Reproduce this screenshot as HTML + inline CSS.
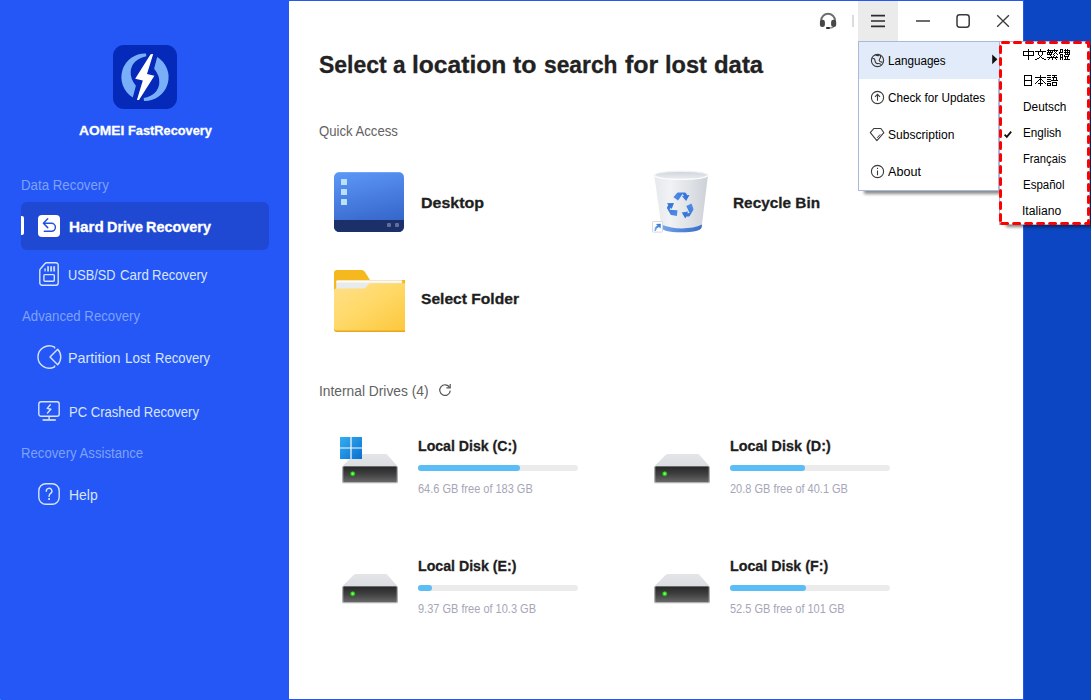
<!DOCTYPE html>
<html><head><meta charset="utf-8"><title>AOMEI FastRecovery</title>
<style>
html,body{margin:0;padding:0}
body{width:1091px;height:700px;position:relative;overflow:hidden;background:#0c46c3;font-family:"Liberation Sans",sans-serif}
.a{position:absolute}
.t{position:absolute;white-space:nowrap;line-height:normal;transform-origin:0 50%;font-family:"Liberation Sans",sans-serif}
svg{position:absolute;overflow:visible}
#side{left:0;top:0;width:289px;height:700px;background:#2457f5}
#main{left:289px;top:1px;width:734px;height:698px;background:#ffffff}
#topb{left:288px;top:0;width:736px;height:1px;background:#2457f5}
#botb{left:288px;top:699px;width:736px;height:1px;background:#2457f5}
#rightb{left:1023px;top:0;width:1px;height:700px;background:#2457f5}
#sideb{left:288px;top:0;width:1px;height:700px;background:#2457f5}
#dot{left:0;top:699px;width:1px;height:1px;background:#0aa0ff}
#sel{left:21px;top:202px;width:248px;height:48px;border-radius:6px;background:#1f49d2}
#selbar{left:21px;top:216px;width:3px;height:19px;border-radius:0 2px 2px 0;background:#fff}
#logo{left:113px;top:45px;width:64px;height:64px;border-radius:11px;background:#0529b8}
#mbtn{left:858px;top:1px;width:40px;height:40px;background:#ebebeb}
#sep{left:852px;top:15px;width:1.6px;height:12px;background:#dcdcdc}
#menu{left:858px;top:41px;width:141px;height:150px;background:#fff;border:1px solid #a9b9d9;box-sizing:border-box;box-shadow:5px 4px 3px -1px rgba(0,0,0,.45)}
#mhl{left:859px;top:42px;width:140px;height:37px;background:#e1ebf9}
#sub{left:999px;top:41px;width:91px;height:184px;box-sizing:border-box;border:1px solid #a9b9d9;background:#fff;box-shadow:6px 3px 3px -1px rgba(0,0,0,.5)}
.bar{height:6px;width:160px;border-radius:3px;background:#ebebeb}
.fill{height:6px;border-radius:3px;background:#5bbdf6;left:0;top:0}

</style></head>
<body>
<div class="a" id="side"></div>
<div class="a" id="main"></div>
<div class="a" id="topb"></div><div class="a" id="botb"></div><div class="a" id="rightb"></div><div class="a" id="sideb"></div><div class="a" id="dot"></div>

<!-- logo -->
<div class="a" id="logo"></div>
<svg style="left:113px;top:45px" width="64" height="64" viewBox="0 0 64 64">
 <g fill="#79aef9">
  <path id="cres" d="M33,8.4 A23.8,23.8 0 0 0 19.8,52.5 L22.9,40.7 Q17.2,34 17.7,26.5 Q18.8,14.6 33.3,11.3 Z"/>
  <use href="#cres" transform="rotate(180 32 32.2)"/>
 </g>
 <path fill="#fff" d="M37.6,9.3 L40.2,9 L34,28.9 L41.4,30.7 L26,55 L23.9,55 L29.8,35.4 L22.2,33.8 Z"/>
</svg>

<!-- selected item -->
<div class="a" id="sel"></div><div class="a" id="selbar"></div>
<svg style="left:38px;top:215px" width="22" height="22" viewBox="0 0 22 22">
 <rect x="0" y="0" width="22" height="22" rx="4" fill="#fff"/>
 <path d="M9.7,3.8 L5.4,8.3 L9.7,12.6 M5.6,8.3 H13.4 A4,4 0 0 1 13.4,16.3 H6.3" fill="none" stroke="#2452e0" stroke-width="1.5" stroke-linecap="round" stroke-linejoin="round"/>
</svg>
<!-- sd card -->
<svg style="left:39px;top:262px" width="20" height="24" viewBox="0 0 20 24">
 <g fill="none" stroke="#d6e4fd" stroke-width="1.4" stroke-linejoin="round">
  <path d="M7.6,0.8 H17 a2.2,2.2 0 0 1 2.2,2.2 V21 a2.2,2.2 0 0 1 -2.2,2.2 H3 a2.2,2.2 0 0 1 -2.2,-2.2 V8.3 Q0.8,7.4 1.5,6.7 L6,1.5 Q6.7,0.8 7.6,0.8 Z"/>
  <rect x="4.9" y="12.6" width="10.4" height="6.6" rx="1"/>
 </g>
 <g fill="#c3d7fc"><rect x="5.3" y="6.4" width="1.5" height="3"/><rect x="8.1" y="4.2" width="1.9" height="5.3"/><rect x="11.2" y="4.2" width="1.9" height="5.3"/><rect x="14.2" y="4.2" width="1.9" height="5.3"/></g>
</svg>
<!-- partition -->
<svg style="left:36px;top:345px" width="24" height="24" viewBox="0 0 24 24">
 <g fill="none" stroke="#d6e4fd" stroke-width="1.4" stroke-linejoin="round" stroke-linecap="butt">
  <path d="M18.6,3.5 V2.2 A11.2,11.2 0 1 0 18.6,21.8 V20.5"/>
  <path d="M14,12 L21.7,4.3 A11.2,11.2 0 0 1 21.7,19.7 Z"/>
 </g>
</svg>
<!-- pc -->
<svg style="left:38px;top:401px" width="22" height="21" viewBox="0 0 22 21">
 <g fill="none" stroke="#d6e4fd" stroke-width="1.4" stroke-linejoin="round" stroke-linecap="round">
  <rect x="0.8" y="0.7" width="20.4" height="14.5" rx="2.2"/>
  <path d="M12.3,3.8 L9.2,7.4 L12.8,8.3 L9.5,12"/>
  <path d="M11.1,15.6 V18.6" stroke-linecap="butt"/>
  <path d="M4.6,19 H17.8" stroke-width="1.7" stroke-linecap="butt"/>
 </g>
</svg>
<!-- help -->
<svg style="left:38px;top:483px" width="22" height="22" viewBox="0 0 22 22">
 <g fill="none" stroke="#d6e4fd" stroke-width="1.4" stroke-linecap="round">
  <rect x="0.8" y="0.8" width="20.4" height="20.4" rx="7"/>
  <path d="M8.3,8.2 A2.8,2.8 0 1 1 12.6,10.4 Q11.1,11.5 11.1,13.4"/>
 </g>
 <rect x="10.2" y="15.1" width="1.8" height="1.8" fill="#d6e4fd"/>
</svg>

<!-- titlebar -->
<div class="a" id="mbtn"></div><div class="a" id="sep"></div>
<svg style="left:818px;top:11px" width="20" height="20" viewBox="0 0 20 20">
 <path d="M3.2,10.4 V9.6 A6.9,6.9 0 0 1 17,9.6 V10.4" fill="none" stroke="#6e6e6e" stroke-width="1.9"/>
 <rect x="1.9" y="8.7" width="5" height="7.3" rx="2.3" fill="#474747"/>
 <rect x="13.1" y="8.7" width="5.1" height="7.3" rx="2.3" fill="#474747"/>
 <path d="M16.2,15.5 Q15.3,17.2 10.5,17.1" fill="none" stroke="#555" stroke-width="1"/>
 <rect x="8" y="16.1" width="3.9" height="1.9" rx="0.9" fill="#2e2e2e"/>
</svg>
<svg style="left:871px;top:14px" width="14" height="14" viewBox="0 0 14 14">
 <path d="M0,1.7 H14 M0,7 H14 M0,12.4 H14" stroke="#2c2c2c" stroke-width="1.7"/>
</svg>
<svg style="left:916px;top:14px" width="100" height="14" viewBox="0 0 100 14">
 <g fill="none" stroke="#3a3a3a" stroke-width="1.5">
  <path d="M0,7 H14"/>
  <rect x="41" y="0.8" width="12.2" height="12.4" rx="2.6"/>
  <path d="M81.2,1.2 L92.9,12.8 M92.9,1.2 L81.2,12.8" stroke-width="1.3"/>
 </g>
</svg>

<!-- quick access icons -->
<!-- desktop -->
<svg style="left:334px;top:172px" width="70" height="60" viewBox="0 0 70 60">
 <defs>
  <linearGradient id="dg" x1="0" y1="0" x2="0.25" y2="1"><stop offset="0" stop-color="#5d98f7"/><stop offset="1" stop-color="#3565c9"/></linearGradient>
  <clipPath id="dc"><rect x="0" y="0" width="70" height="60" rx="5.5"/></clipPath>
 </defs>
 <g clip-path="url(#dc)">
  <rect x="0" y="0" width="70" height="60" fill="url(#dg)"/>
  <rect x="0" y="48" width="70" height="12" fill="#1b3068"/>
  <rect x="0" y="0" width="70" height="1" fill="#79aefb" opacity=".7"/>
 </g>
 <g fill="#b9e0f9"><rect x="7" y="7" width="6" height="6" rx=".5"/><rect x="7" y="17" width="6" height="6" rx=".5"/><rect x="7" y="27" width="6" height="6" rx=".5"/></g>
 <g fill="#5f6f99"><rect x="53" y="51" width="4" height="4" rx=".8"/><rect x="61" y="51" width="4" height="4" rx=".8"/></g>
</svg>
<!-- recycle bin -->
<svg style="left:652px;top:170px" width="58" height="64" viewBox="0 0 58 64">
 <defs>
  <linearGradient id="rg" x1="0" y1="0" x2="1" y2="0"><stop offset="0" stop-color="#e6e9ed"/><stop offset=".3" stop-color="#f0f2f4"/><stop offset=".65" stop-color="#dfe2e6"/><stop offset="1" stop-color="#cdd1d8"/></linearGradient>
  <linearGradient id="rc1" gradientUnits="userSpaceOnUse" x1="-13" y1="0" x2="13" y2="0"><stop offset="0" stop-color="#5a9cf0"/><stop offset="1" stop-color="#2a66d0"/></linearGradient>
  <linearGradient id="rc2" x1="0" y1="1" x2="1" y2="0"><stop offset="0" stop-color="#7db3ee"/><stop offset="1" stop-color="#2f6fd6"/></linearGradient>
  <linearGradient id="rim" x1="0" y1="0" x2="0" y2="1"><stop offset="0" stop-color="#d2d6dc"/><stop offset="1" stop-color="#e8eaee"/></linearGradient>
  <linearGradient id="rb2" x1="0" y1="0" x2="1" y2="0"><stop offset="0" stop-color="#7aa7e6"/><stop offset=".5" stop-color="#4f86dc"/><stop offset="1" stop-color="#3b6fca"/></linearGradient>
 </defs>
 <path d="M2.2,5.3 L9.6,57.4 Q10,61.9 29,62.2 Q48.6,61.9 49.6,57.4 L56,5.3 Z" fill="url(#rg)"/>
 <path d="M9,54.6 Q20,58.6 30,58.5 Q42,58.4 50,54.6 L49.6,57.4 Q48.6,61.9 29,62.2 Q10,61.9 9.6,57.4 Z" fill="url(#rb2)"/>
 <ellipse cx="29.1" cy="5.3" rx="26.9" ry="4.1" fill="#eceef1" stroke="#eff1f3" stroke-width="1"/>
 <ellipse cx="29.1" cy="5.3" rx="25.6" ry="3.3" fill="url(#rim)"/>
 <path d="M2.6,5.6 Q6,9.3 29.1,9.4 Q52,9.3 55.6,5.6" fill="none" stroke="#fbfcfc" stroke-width="1.1"/>
 <g transform="translate(28.6,35.6)">
  <path id="ra" d="M-7.2,-8.4 L-3.6,-12.7 Q-3.2,-13.1 -2.6,-13.1 L4.2,-13.1 Q4.9,-13.1 5.3,-12.5 L6.6,-10.4 L8.9,-10.6 L5.5,-4.5 L1.4,-9.4 L3.2,-9.7 L1.9,-11.6 L0.4,-9.4 L-2.5,-5.1 Z" fill="url(#rc1)"/>
  <use href="#ra" transform="rotate(120)"/>
  <use href="#ra" transform="rotate(240)"/>
 </g>
 <rect x="0.5" y="51.5" width="10" height="10.6" rx=".6" fill="#fff" stroke="#cfd2d7" stroke-width=".8"/>
 <path d="M3.5,2.4 L8.4,2.2 L8.2,7.1 L6.6,5.5 Q3.9,6.3 3.4,9.4 L2,9.4 Q1.9,5.4 5.1,4 Z" transform="translate(0.4,51.6)" fill="url(#rc2)"/>
</svg>
<!-- folder -->
<svg style="left:334px;top:270px" width="71" height="62" viewBox="0 0 71 62">
 <defs>
  <linearGradient id="fg" x1="0" y1="0" x2="1" y2="1"><stop offset="0" stop-color="#ffe08a"/><stop offset=".45" stop-color="#ffd968"/><stop offset="1" stop-color="#fcc63a"/></linearGradient>
  <clipPath id="fc"><rect x="0" y="0" width="71" height="62"/></clipPath>
 </defs>
 <g clip-path="url(#fc)">
  <path d="M0,3 Q0,0 3,0 H27.5 Q29.6,0 30.8,1.8 L36,10 H74 V30 H0 Z" fill="#f5b91f"/>
  <rect x="2.2" y="10.6" width="66" height="12" rx="1.5" fill="#e9eaea"/>
  <rect x="2.2" y="10.6" width="66" height="2" rx="1" fill="#fbfbfb"/>
  <path d="M0,20.5 Q0,18.4 2.2,18.4 H29.6 Q31,18.4 32,17.2 L34.4,14.4 Q35.4,13.3 37,13.3 H74 V62 H3 Q0,62 0,59 Z" fill="url(#fg)"/>
  <path d="M0,59 Q0,62 3,62 H74 V60.6 H3 Q0.6,60.6 0,58.4 Z" fill="#e9a61c"/>
 </g>
</svg>

<!-- refresh -->
<svg style="left:438px;top:383.2px" width="14" height="14" viewBox="0 0 14 14">
 <path d="M11.6,4.4 A5.3,5.3 0 1 0 12.3,7.6" fill="none" stroke="#555" stroke-width="1.2"/>
 <path d="M12.2,1 V4.8 H8.4" fill="none" stroke="#555" stroke-width="1.2"/>
</svg>

<!-- drives -->
<svg width="0" height="0" style="left:0;top:0">
 <defs>
  <linearGradient id="hd1" x1="0" y1="0" x2="0" y2="1"><stop offset="0" stop-color="#272727"/><stop offset=".5" stop-color="#404040"/><stop offset="1" stop-color="#676767"/></linearGradient>
  <linearGradient id="hd2" x1="0" y1="0" x2="0" y2="1"><stop offset="0" stop-color="#e4e5e8"/><stop offset="1" stop-color="#dcdde1"/></linearGradient>
  <radialGradient id="led"><stop offset="0" stop-color="#b8ff9a"/><stop offset=".5" stop-color="#3be82a"/><stop offset="1" stop-color="#1f9e18"/></radialGradient>
  <g id="drive">
   <path d="M12.6,0 H44.6 L55.6,12.2 H0.4 Z" fill="url(#hd2)"/>
   <rect x="0" y="11.9" width="56" height="17.3" rx="1.6" fill="#aeafb3"/>
   <rect x="1.3" y="12.5" width="53.4" height="15.5" rx="1" fill="url(#hd1)"/>
   <circle cx="10.7" cy="19.7" r="2.5" fill="url(#led)"/>
  </g>
 </defs>
</svg>
<svg style="left:342px;top:454px" width="56" height="30"><use href="#drive"/></svg>
<svg style="left:654px;top:454px" width="56" height="30"><use href="#drive"/></svg>
<svg style="left:342px;top:574px" width="56" height="30"><use href="#drive"/></svg>
<svg style="left:654px;top:574px" width="56" height="30"><use href="#drive"/></svg>
<!-- windows logo -->
<svg style="left:340px;top:437px" width="22" height="22" viewBox="0 0 22 22">
 <defs><linearGradient id="wg" x1="0" y1="0" x2="1" y2="1"><stop offset="0" stop-color="#35aef0"/><stop offset="1" stop-color="#0a6fd0"/></linearGradient></defs>
 <rect width="22" height="22" fill="#fff"/>
 <path d="M0,0 H10.4 V10.4 H0 Z M11.6,0 H22 V10.4 H11.6 Z M0,11.6 H10.4 V22 H0 Z M11.6,11.6 H22 V22 H11.6 Z" fill="url(#wg)"/>
</svg>
<!-- bars -->
<div class="a bar" style="left:418px;top:465px"><div class="a fill" style="width:102px"></div></div>
<div class="a bar" style="left:730px;top:465px"><div class="a fill" style="width:75px"></div></div>
<div class="a bar" style="left:418px;top:585px"><div class="a fill" style="width:14px"></div></div>
<div class="a bar" style="left:730px;top:585px"><div class="a fill" style="width:76px"></div></div>

<!-- menu -->
<div class="a" id="menu"></div><div class="a" id="mhl"></div>
<svg style="left:870px;top:53px" width="15" height="15" viewBox="0 0 15 15">
 <g fill="none" stroke="#3a3a3a" stroke-width="1.1">
  <circle cx="7.5" cy="7.5" r="6.1"/>
  <path d="M2.4,5.6 Q4.6,5 5,7.6 Q5.4,10.6 7.6,10.6 Q9.6,10.4 11.4,11.6 M5.6,2 Q7.4,3 9.4,2.4 M10.6,2.6 Q10.8,4.6 9.6,6 Q8.6,7.6 10,8.6 L12.6,9.4"/>
 </g>
</svg>
<svg style="left:870px;top:90px" width="15" height="15" viewBox="0 0 15 15">
 <g fill="none" stroke="#3a3a3a" stroke-width="1.1">
  <circle cx="7.5" cy="7.5" r="6.1"/>
  <path d="M7.5,10.8 V4.6 M5,6.9 L7.5,4.4 L10,6.9"/>
 </g>
</svg>
<svg style="left:869px;top:127px" width="16" height="15" viewBox="0 0 16 15">
 <g fill="none" stroke="#3a3a3a" stroke-width="1.1" stroke-linejoin="round">
  <path d="M4.8,1.5 H11.9 L14.9,5.7 L7.9,13.6 L1.3,5.7 Z"/>
  <path d="M8.2,10.8 L11.2,7.4" stroke-width="1"/>
 </g>
</svg>
<svg style="left:870px;top:164px" width="15" height="15" viewBox="0 0 15 15">
 <g fill="none" stroke="#3a3a3a" stroke-width="1.1">
  <circle cx="7.5" cy="7.5" r="6.1"/>
  <path d="M7.5,6.4 V11.2 M7.5,3.8 V5"/>
 </g>
</svg>
<svg style="left:992px;top:54px" width="6" height="11" viewBox="0 0 6 11"><path d="M0.2,0.4 L5.4,5.3 L0.2,10.2 Z" fill="#111"/></svg>

<!-- submenu -->
<div class="a" id="sub"></div>
<svg style="left:999px;top:41px" width="92" height="186" viewBox="0 0 92 186">
 <g fill="none" stroke="#ff0000" stroke-width="3" stroke-linecap="round" stroke-dasharray="6 6">
  <path d="M1.5,1.5 H89.5 V182.6 H1.5" stroke-dashoffset="-2"/>
  <path d="M1.5,5.5 V180"/>
 </g>
</svg>
<svg style="left:1004px;top:130px" width="8" height="8" viewBox="0 0 8 8"><path d="M0.6,4.6 L2.8,6.8 L7.2,1.6" fill="none" stroke="#111" stroke-width="1.8"/></svg>
<svg style="left:1020px;top:46px" width="56" height="44" viewBox="0 0 56 44" shape-rendering="crispEdges"><path d="M8,3h1v1h-1zM8,4h1v1h-1zM3,5h11v1h-11zM3,6h1v1h-1zM8,6h1v1h-1zM13,6h1v1h-1zM3,7h1v1h-1zM8,7h1v1h-1zM13,7h1v1h-1zM3,8h1v1h-1zM8,8h1v1h-1zM13,8h1v1h-1zM3,9h11v1h-11zM8,10h1v1h-1zM8,11h1v1h-1zM8,12h1v1h-1zM8,13h1v1h-1zM20,3h1v1h-1zM20,4h1v1h-1zM15,5h11v1h-11zM18,6h1v1h-1zM22,6h1v1h-1zM18,7h1v1h-1zM22,7h1v1h-1zM18,8h1v1h-1zM22,8h1v1h-1zM19,9h1v1h-1zM21,9h1v1h-1zM20,10h1v1h-1zM19,11h1v1h-1zM21,11h1v1h-1zM17,12h2v1h-2zM22,12h2v1h-2zM15,13h2v1h-2zM24,13h2v1h-2zM28,3h1v1h-1zM34,3h1v1h-1zM27,4h11v1h-11zM28,5h1v1h-1zM30,5h1v1h-1zM32,5h1v1h-1zM34,5h1v1h-1zM36,5h1v1h-1zM27,6h6v1h-6zM35,6h1v1h-1zM27,7h1v1h-1zM29,7h1v1h-1zM31,7h1v1h-1zM34,7h1v1h-1zM36,7h1v1h-1zM27,8h5v1h-5zM33,8h1v1h-1zM37,8h1v1h-1zM30,9h1v1h-1zM34,9h1v1h-1zM31,10h1v1h-1zM33,10h1v1h-1zM36,10h1v1h-1zM27,11h11v1h-11zM29,12h1v1h-1zM32,12h1v1h-1zM35,12h1v1h-1zM28,13h1v1h-1zM32,13h1v1h-1zM36,13h1v1h-1zM40,3h3v1h-3zM45,3h1v1h-1zM47,3h1v1h-1zM40,4h1v1h-1zM42,4h1v1h-1zM44,4h6v1h-6zM40,5h1v1h-1zM42,5h1v1h-1zM45,5h1v1h-1zM47,5h1v1h-1zM49,5h1v1h-1zM39,6h4v1h-4zM44,6h6v1h-6zM39,7h1v1h-1zM45,7h1v1h-1zM47,7h1v1h-1zM49,7h1v1h-1zM40,8h3v1h-3zM45,8h5v1h-5zM40,9h1v1h-1zM42,9h1v1h-1zM44,9h1v1h-1zM48,9h1v1h-1zM40,10h1v1h-1zM42,10h1v1h-1zM44,10h5v1h-5zM40,11h3v1h-3zM45,11h1v1h-1zM47,11h1v1h-1zM40,12h1v1h-1zM42,12h1v1h-1zM45,12h1v1h-1zM47,12h1v1h-1zM40,13h1v1h-1zM42,13h1v1h-1zM44,13h6v1h-6zM4,29h8v1h-8zM4,34h8v1h-8zM4,39h8v1h-8zM4,30h1v1h-1zM11,30h1v1h-1zM4,31h1v1h-1zM11,31h1v1h-1zM4,32h1v1h-1zM11,32h1v1h-1zM4,33h1v1h-1zM11,33h1v1h-1zM4,35h1v1h-1zM11,35h1v1h-1zM4,36h1v1h-1zM11,36h1v1h-1zM4,37h1v1h-1zM11,37h1v1h-1zM4,38h1v1h-1zM11,38h1v1h-1zM20,29h1v1h-1zM20,30h1v1h-1zM15,31h11v1h-11zM20,32h1v1h-1zM19,33h3v1h-3zM18,34h1v1h-1zM20,34h1v1h-1zM22,34h1v1h-1zM17,35h1v1h-1zM20,35h1v1h-1zM23,35h1v1h-1zM16,36h1v1h-1zM20,36h1v1h-1zM24,36h1v1h-1zM15,37h1v1h-1zM18,37h5v1h-5zM25,37h1v1h-1zM20,38h1v1h-1zM20,39h1v1h-1zM27,29h4v1h-4zM32,29h5v1h-5zM34,30h1v1h-1zM27,31h4v1h-4zM32,31h5v1h-5zM33,32h1v1h-1zM36,32h1v1h-1zM27,33h4v1h-4zM33,33h1v1h-1zM36,33h1v1h-1zM31,34h7v1h-7zM27,35h4v1h-4zM32,36h5v1h-5zM27,37h4v1h-4zM32,37h1v1h-1zM36,37h1v1h-1zM27,38h1v1h-1zM30,38h1v1h-1zM32,38h1v1h-1zM36,38h1v1h-1zM27,39h4v1h-4zM32,39h5v1h-5z" fill="#000"/></svg>

<span class="t" id="branda" style="left:79px;top:123.00px;font-size:13.4px;font-weight:bold;color:#ffffff;-webkit-text-stroke:0.3px #ffffff;transform:scaleX(1.0313)">AOMEI</span>
<span class="t" id="brandb" style="left:128px;top:123.00px;font-size:13.4px;font-weight:bold;color:#ffffff;-webkit-text-stroke:0.3px #ffffff;transform:scaleX(0.9552)">FastRecovery</span>
<span class="t" id="s1" style="left:21px;top:177.00px;font-size:14px;font-weight:normal;color:#7fa1fa;transform:scaleX(0.9489)">Data Recovery</span>
<span class="t" id="i1a" style="left:69px;top:219.00px;font-size:14.6px;font-weight:bold;color:#ffffff;-webkit-text-stroke:0.3px #ffffff;transform:scaleX(1.0437)">Hard</span>
<span class="t" id="i1b" style="left:107px;top:219.00px;font-size:14.6px;font-weight:bold;color:#ffffff;-webkit-text-stroke:0.3px #ffffff;transform:scaleX(0.9855)">Drive</span>
<span class="t" id="i1c" style="left:146px;top:219.00px;font-size:14.6px;font-weight:bold;color:#ffffff;-webkit-text-stroke:0.3px #ffffff;transform:scaleX(0.9879)">Recovery</span>
<span class="t" id="i2a" style="left:68px;top:267.00px;font-size:14.3px;font-weight:normal;color:#d9e5ff;transform:scaleX(0.8910)">USB/SD</span>
<span class="t" id="i2b" style="left:120px;top:267.00px;font-size:14.3px;font-weight:normal;color:#d9e5ff;transform:scaleX(0.9292)">Card</span>
<span class="t" id="i2c" style="left:152px;top:267.00px;font-size:14.3px;font-weight:normal;color:#d9e5ff;transform:scaleX(0.9171)">Recovery</span>
<span class="t" id="s2" style="left:22px;top:308.00px;font-size:14px;font-weight:normal;color:#7fa1fa;transform:scaleX(0.9425)">Advanced Recovery</span>
<span class="t" id="i3a" style="left:68px;top:350.00px;font-size:14.3px;font-weight:normal;color:#d9e5ff;transform:scaleX(1.0003)">Partition</span>
<span class="t" id="i3b" style="left:125px;top:350.00px;font-size:14.3px;font-weight:normal;color:#d9e5ff;transform:scaleX(0.9367)">Lost</span>
<span class="t" id="i3c" style="left:155px;top:350.00px;font-size:14.3px;font-weight:normal;color:#d9e5ff;transform:scaleX(0.9132)">Recovery</span>
<span class="t" id="i4" style="left:69px;top:404.00px;font-size:14.3px;font-weight:normal;color:#d9e5ff;transform:scaleX(0.9139)">PC Crashed Recovery</span>
<span class="t" id="s3" style="left:21px;top:445.00px;font-size:14px;font-weight:normal;color:#7fa1fa;transform:scaleX(0.9402)">Recovery Assistance</span>
<span class="t" id="i5" style="left:69px;top:487.00px;font-size:14.3px;font-weight:normal;color:#d9e5ff;transform:scaleX(0.9759)">Help</span>
<span class="t" id="title0" style="left:319px;top:51.00px;font-size:24.4px;font-weight:bold;color:#222222;-webkit-text-stroke:0.3px #222222;transform:scaleX(0.9426)">Select</span>
<span class="t" id="title1" style="left:393px;top:51.00px;font-size:24.4px;font-weight:bold;color:#222222;-webkit-text-stroke:0.3px #222222;transform:scaleX(0.9257)">a</span>
<span class="t" id="title2" style="left:412px;top:51.00px;font-size:24.4px;font-weight:bold;color:#222222;-webkit-text-stroke:0.3px #222222;transform:scaleX(1.0079)">location</span>
<span class="t" id="title3" style="left:513px;top:51.00px;font-size:24.4px;font-weight:bold;color:#222222;-webkit-text-stroke:0.3px #222222;transform:scaleX(1.0200)">to</span>
<span class="t" id="title4" style="left:544px;top:51.00px;font-size:24.4px;font-weight:bold;color:#222222;-webkit-text-stroke:0.3px #222222;transform:scaleX(0.9348)">search</span>
<span class="t" id="title5" style="left:625px;top:51.00px;font-size:24.4px;font-weight:bold;color:#222222;-webkit-text-stroke:0.3px #222222;transform:scaleX(1.0230)">for</span>
<span class="t" id="title6" style="left:665px;top:51.00px;font-size:24.4px;font-weight:bold;color:#222222;-webkit-text-stroke:0.3px #222222;transform:scaleX(0.9638)">lost</span>
<span class="t" id="title7" style="left:714px;top:51.00px;font-size:24.4px;font-weight:bold;color:#222222;-webkit-text-stroke:0.3px #222222;transform:scaleX(0.9794)">data</span>
<span class="t" id="qa" style="left:319px;top:123.00px;font-size:14px;font-weight:normal;color:#626262;transform:scaleX(0.9383)">Quick Access</span>
<span class="t" id="desk" style="left:421px;top:194.00px;font-size:15.2px;font-weight:bold;color:#1e1e1e;-webkit-text-stroke:0.3px #1e1e1e;transform:scaleX(1.0519)">Desktop</span>
<span class="t" id="rb" style="left:733px;top:194.00px;font-size:15.2px;font-weight:bold;color:#1e1e1e;-webkit-text-stroke:0.3px #1e1e1e;transform:scaleX(1.0118)">Recycle Bin</span>
<span class="t" id="sf" style="left:421px;top:290.00px;font-size:15.2px;font-weight:bold;color:#1e1e1e;-webkit-text-stroke:0.3px #1e1e1e;transform:scaleX(1.0271)">Select Folder</span>
<span class="t" id="idr" style="left:319px;top:383.00px;font-size:14px;font-weight:normal;color:#626262;transform:scaleX(0.9843)">Internal Drives (4)</span>
<span class="t" id="dc" style="left:418px;top:437.00px;font-size:15.2px;font-weight:bold;color:#1e1e1e;-webkit-text-stroke:0.3px #1e1e1e;transform:scaleX(0.9305)">Local Disk (C:)</span>
<span class="t" id="dcs" style="left:418px;top:482.00px;font-size:12.6px;font-weight:normal;color:#a6a6b8;transform:scaleX(0.8716)">64.6 GB free of 183 GB</span>
<span class="t" id="dd" style="left:730px;top:437.00px;font-size:15.2px;font-weight:bold;color:#1e1e1e;-webkit-text-stroke:0.3px #1e1e1e;transform:scaleX(0.9473)">Local Disk (D:)</span>
<span class="t" id="dds" style="left:730px;top:482.00px;font-size:12.6px;font-weight:normal;color:#a6a6b8;transform:scaleX(0.8730)">20.8 GB free of 40.1 GB</span>
<span class="t" id="de" style="left:418px;top:557.00px;font-size:15.2px;font-weight:bold;color:#1e1e1e;-webkit-text-stroke:0.3px #1e1e1e;transform:scaleX(0.9323)">Local Disk (E:)</span>
<span class="t" id="des" style="left:418px;top:602.00px;font-size:12.6px;font-weight:normal;color:#a6a6b8;transform:scaleX(0.8731)">9.37 GB free of 10.3 GB</span>
<span class="t" id="df" style="left:730px;top:557.00px;font-size:15.2px;font-weight:bold;color:#1e1e1e;-webkit-text-stroke:0.3px #1e1e1e;transform:scaleX(0.9381)">Local Disk (F:)</span>
<span class="t" id="dfs" style="left:730px;top:602.00px;font-size:12.6px;font-weight:normal;color:#a6a6b8;transform:scaleX(0.8714)">52.5 GB free of 101 GB</span>
<span class="t" id="m1" style="left:888px;top:54.00px;font-size:12.5px;font-weight:normal;color:#000000;transform:scaleX(0.9322)">Languages</span>
<span class="t" id="m2" style="left:888px;top:91.00px;font-size:12.5px;font-weight:normal;color:#000000;transform:scaleX(0.9380)">Check for Updates</span>
<span class="t" id="m3" style="left:888px;top:128.00px;font-size:12.5px;font-weight:normal;color:#000000;transform:scaleX(0.9650)">Subscription</span>
<span class="t" id="m4" style="left:888px;top:165.00px;font-size:12.5px;font-weight:normal;color:#000000;transform:scaleX(1.0064)">About</span>
<span class="t" id="l3" style="left:1023px;top:100.00px;font-size:12.5px;font-weight:normal;color:#000000;transform:scaleX(0.9466)">Deutsch</span>
<span class="t" id="l4" style="left:1023px;top:126.00px;font-size:12.5px;font-weight:normal;color:#000000;transform:scaleX(0.9355)">English</span>
<span class="t" id="l5" style="left:1023px;top:152.00px;font-size:12.5px;font-weight:normal;color:#000000;transform:scaleX(0.8979)">Français</span>
<span class="t" id="l6" style="left:1023px;top:178.00px;font-size:12.5px;font-weight:normal;color:#000000;transform:scaleX(0.9175)">Español</span>
<span class="t" id="l7" style="left:1022px;top:204.00px;font-size:12.5px;font-weight:normal;color:#000000;transform:scaleX(0.9707)">Italiano</span>
</body></html>
